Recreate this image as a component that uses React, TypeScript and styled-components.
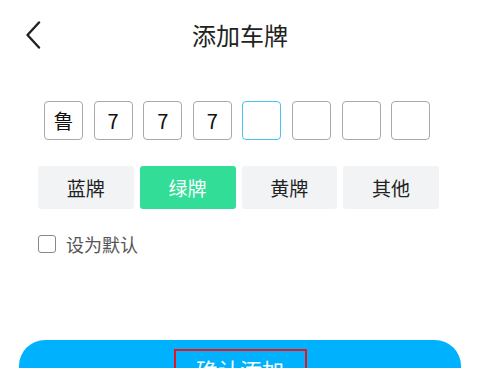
import React, { useState } from "react";
import styled, { createGlobalStyle } from "styled-components";

const Global = createGlobalStyle`
  html, body { margin: 0; padding: 0; background: #fff; }
  body { width: 480px; height: 368px; overflow: hidden; font-family: "Noto Sans CJK SC", "Noto Sans", sans-serif; }
`;

const Page = styled.div`
  width: 480px;
  height: 368px;
  overflow: hidden;
  display: flex;
  flex-direction: column;
  & > * { flex-shrink: 0; }
`;

const Header = styled.div`
  position: relative;
  height: 70px;
  display: flex;
  align-items: center;
  justify-content: center;
`;

const Back = styled.button`
  position: absolute;
  left: 22px;
  top: 18px;
  width: 22px;
  height: 34px;
  border: 0;
  padding: 0;
  background: none;
  display: flex;
  align-items: center;
  justify-content: center;
`;

const Title = styled.h1`
  margin: 0;
  font-size: 24px;
  font-weight: 400;
  color: #222;
  line-height: 1;
`;

const PlateRow = styled.div`
  display: flex;
  gap: 10.6px;
  padding-left: 44px;
  margin-top: 31px;
`;

const PlateBox = styled.div<{ $active?: boolean }>`
  width: 39px;
  height: 39px;
  box-sizing: border-box;
  border: 1.5px solid ${(p) => (p.$active ? "#48c2ef" : "#a9a9a9")};
  border-radius: 4px;
  display: flex;
  align-items: center;
  justify-content: center;
  font-size: 20px;
  color: #111;
  font-family: "Noto Sans CJK SC", "Roboto", sans-serif;
`;

const TypeRow = styled.div`
  display: grid;
  grid-template-columns: repeat(4, 1fr);
  gap: 6px;
  padding: 0 41px 0 38px;
  margin-top: 26px;
`;

const TypeButton = styled.button<{ $selected?: boolean }>`
  height: 43px;
  border: 0;
  border-radius: 3px;
  background: ${(p) => (p.$selected ? "#31dd97" : "#f2f3f5")};
  color: ${(p) => (p.$selected ? "#fff" : "#222")};
  font-family: "Noto Sans CJK SC", sans-serif;
  font-size: 19px;
  padding: 0;
`;

const CheckRow = styled.label`
  display: flex;
  align-items: center;
  gap: 10px;
  padding-left: 38px;
  margin-top: 26px;
  font-size: 18px;
  color: #555;
  height: 18px;
`;

const CheckBox = styled.span`
  width: 18px;
  height: 18px;
  box-sizing: border-box;
  border: 1.5px solid #888;
  border-radius: 3px;
`;

const Submit = styled.button`
  margin: 87px 19px 0;
  height: 52px;
  border: 0;
  border-radius: 26px;
  background: #00b1fe;
  color: #fff;
  font-family: "Noto Sans CJK SC", sans-serif;
  font-size: 22px;
  display: flex;
  justify-content: center;
  align-items: flex-start;
  padding: 9px 0 0;
`;

const Marked = styled.span`
  display: inline-block;
  width: 133px;
  box-sizing: border-box;
  border: 2px solid #e8141c;
  padding-top: 3px;
  height: 40px;
  text-align: center;
  line-height: 1.4;
`;

export default function App() {
  const chars = ["鲁", "7", "7", "7", "", "", "", ""];
  const types = ["蓝牌", "绿牌", "黄牌", "其他"];
  const [sel, setSel] = useState(1);
  return (
    <Page>
      <Global />
      <Header>
        <Back aria-label="返回">
          <svg width="16" height="28" viewBox="0 0 16 28">
            <path d="M14 1.5 L2.5 14 L14 26.5" fill="none" stroke="#222" strokeWidth="2.4" strokeLinecap="round" strokeLinejoin="round" />
          </svg>
        </Back>
        <Title>添加车牌</Title>
      </Header>
      <PlateRow>
        {chars.map((c, i) => (
          <PlateBox key={i} $active={i === 4}>
            {c}
          </PlateBox>
        ))}
      </PlateRow>
      <TypeRow>
        {types.map((t, i) => (
          <TypeButton key={t} $selected={i === sel} onClick={() => setSel(i)}>
            {t}
          </TypeButton>
        ))}
      </TypeRow>
      <CheckRow>
        <CheckBox />
        设为默认
      </CheckRow>
      <Submit>
        <Marked>确认添加</Marked>
      </Submit>
    </Page>
  );
}
